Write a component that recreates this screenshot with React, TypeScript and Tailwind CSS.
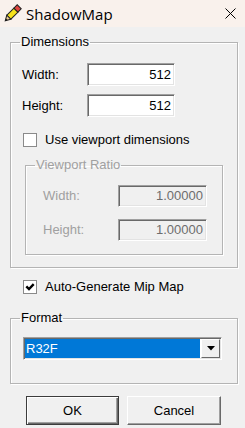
const sunken =
  "border border-t-[#a0a0a0] border-l-[#a0a0a0] border-r-white border-b-white shadow-[inset_1px_1px_0_#696969,inset_-1px_-1px_0_#e3e3e3]"

const groupBox =
  "border border-[#b4b4b4] shadow-[inset_1px_1px_0_#fff,1px_1px_0_#fff]"

const Pencil = () => (
  <svg width="21" height="21" viewBox="0 0 20 20">
    <g transform="rotate(-45 10 10)">
      <rect x="14.5" y="7.3" width="4.5" height="5.4" fill="#e0453f" stroke="#222" strokeWidth="1" />
      <rect x="5" y="7.3" width="9.5" height="5.4" fill="#f6e21c" stroke="#222" strokeWidth="1" />
      <polygon points="5,7.3 0.3,10 5,12.7" fill="#e9c992" stroke="#222" strokeWidth="1" />
      <polygon points="2.2,8.9 0.3,10 2.2,11.1" fill="#111" />
    </g>
  </svg>
)

const Field = ({ value, disabled }: { value: string; disabled?: boolean }) => (
  <div
    className={`${sunken} flex items-center justify-end pr-[3px] ${
      disabled ? "bg-[#f0f0f0] text-[#6d6d6d] w-[89px] h-[22px]" : "bg-white w-[88px] h-[23px]"
    }`}
  >
    {value}
  </div>
)

const Check = ({ checked }: { checked?: boolean }) => (
  <div className="w-[14px] h-[14px] bg-white border border-[#8a8a8a] flex items-center justify-center">
    {checked && (
      <svg width="10" height="10" viewBox="0 0 10 10">
        <path d="M1.3 4.3 L4 7 L8.7 2.2" fill="none" stroke="#000" strokeWidth="2.4" />
      </svg>
    )}
  </div>
)

export default function App() {
  return (
    <div className="w-[245px] h-[428px] bg-[#f0f0f0] text-[13px] leading-[16px] text-black font-['Liberation_Sans',Arial,sans-serif] flex flex-col">
      <div className="h-[27px] bg-[#f9f1ec] flex items-center pl-[2px] pr-[9px]">
        <Pencil />
        <span className="ml-[3px] text-[15px] font-['Open_Sans',sans-serif] text-black flex-1">ShadowMap</span>
        <svg width="11" height="11" viewBox="0 0 11 11">
          <path d="M0.5 0.5 L10.5 10.5 M10.5 0.5 L0.5 10.5" stroke="#000" strokeWidth="1" />
        </svg>
      </div>

      <div className="flex flex-col pl-[10px] pr-[7px] pt-[7px]">
        <fieldset className={`${groupBox} pl-[11px] pr-[14px] pb-[12px]`}>
          <legend className="ml-[-2px] px-[1px]">Dimensions</legend>
          <div className="mt-[13px] flex items-center">
            <span className="w-[65px]">Width:</span>
            <Field value="512" />
          </div>
          <div className="mt-[8px] flex items-center">
            <span className="w-[65px]">Height:</span>
            <Field value="512" />
          </div>
          <div className="mt-[15px] ml-[1px] flex items-center gap-[8px]">
            <Check />
            <span>Use viewport dimensions</span>
          </div>
          <fieldset className={`${groupBox} mt-[9px] ml-[3px] w-[198px] pl-[17px] pb-[13px] text-[#a0a0a0]`}>
            <legend className="ml-[-8px] px-[1px]">Viewport Ratio</legend>
            <div className="mt-[12px] flex items-center">
              <span className="w-[75px]">Width:</span>
              <Field value="1.00000" disabled />
            </div>
            <div className="mt-[12px] flex items-center">
              <span className="w-[75px]">Height:</span>
              <Field value="1.00000" disabled />
            </div>
          </fieldset>
        </fieldset>

        <div className="mt-[11px] ml-[13px] flex items-center gap-[8px]">
          <Check checked />
          <span>Auto-Generate Mip Map</span>
        </div>

        <fieldset className={`${groupBox} mt-[15px] pl-[12px] pb-[23px]`}>
          <legend className="ml-[-3px] px-[1px]">Format</legend>
          <div className={`${sunken} mt-[11px] w-[199px] h-[23px] bg-white p-[1px] flex`}>
            <div className="flex-1 bg-[#0078d7] text-white pl-[1px] flex items-center">R32F</div>
            <div className="w-[19px] ml-[1px] bg-[#f0f0f0] border border-t-white border-l-white border-r-[#696969] border-b-[#696969] flex items-center justify-center">
              <svg width="8" height="5" viewBox="0 0 8 5">
                <polygon points="0,0 8,0 4,4.5" fill="#000" />
              </svg>
            </div>
          </div>
        </fieldset>

        <div className="mt-[12px] ml-[16px] flex gap-[8px]">
          <button className="w-[93px] h-[29px] bg-[#f0f0f0] border border-[#3c3c3c] shadow-[inset_1px_1px_0_#fff,inset_-1px_-1px_0_#696969,inset_-2px_-2px_0_#a0a0a0] text-[13px]">
            OK
          </button>
          <button className="w-[94px] h-[29px] bg-[#f0f0f0] border border-t-white border-l-white border-r-[#696969] border-b-[#696969] shadow-[inset_-1px_-1px_0_#a0a0a0] text-[13px]">
            Cancel
          </button>
        </div>
      </div>
    </div>
  )
}
